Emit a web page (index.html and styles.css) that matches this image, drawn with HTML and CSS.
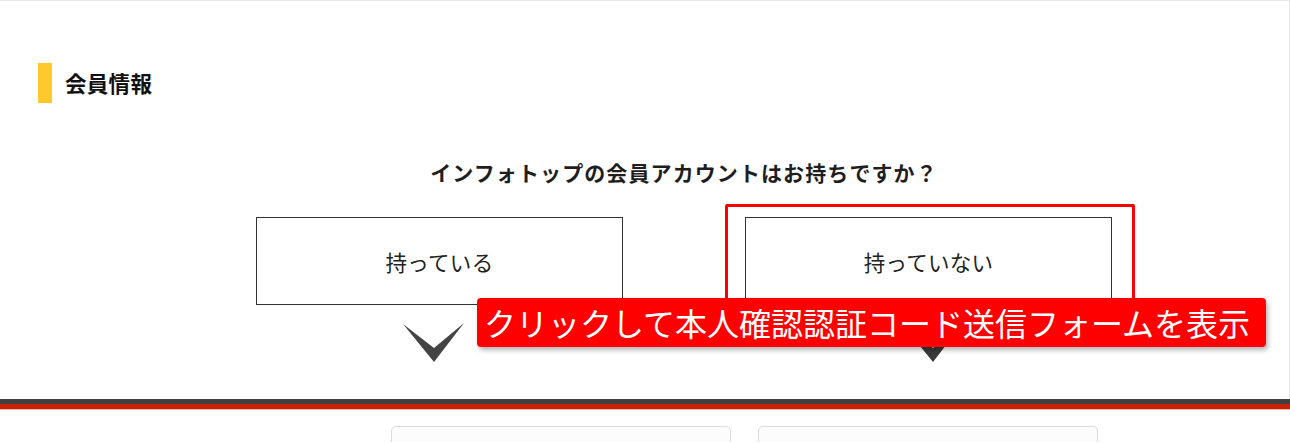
FILE: index.html
```html
<!DOCTYPE html>
<html lang="ja">

<head>
    <meta charset="UTF-8">
    <meta name="viewport" content="width=device-width, initial-scale=1.0">
    <title>会員情報</title>
    <link rel="stylesheet" href="styles.css">
</head>

<body>
    <div id="panel">
        <h2 class="titulo">会員情報</h2>
        <div id="contenido">
            <p class="pregunta">インフォトップの会員アカウントはお持ちですか？</p>
            <div class="opciones">
                <div class="opcion opcion-izq">
                    <button class="boton">持っている</button>
                    <svg class="flecha" width="62" height="40" viewBox="0 0 62 40">
                        <polygon points="0,1 31,39 61,0 31,25" fill="#444"/>
                    </svg>
                </div>
                <div class="opcion opcion-der">
                    <div class="marcado"></div>
                    <button class="boton">持っていない</button>
                    <svg class="flecha" width="62" height="40" viewBox="0 0 62 40">
                        <polygon points="0,1 31,39 61,0 31,25" fill="#3a3a3a"/>
                    </svg>
                </div>
            </div>
        </div>
        <div class="aviso">クリックして本人確認認証コード送信フォームを表示</div>
    </div>
    <div id="barras">
        <div class="barra-oscura"></div>
        <div class="barra-roja"></div>
        <div class="barra-rosa"></div>
    </div>
    <div id="tarjetas">
        <div class="tarjeta"></div>
        <div class="tarjeta"></div>
    </div>
</body>

</html>
```

FILE: styles.css
```css
body {
    margin: 0;
    background-color: white;
    font-family: "Noto Sans CJK JP", "Noto Sans", sans-serif;
    color: #222;
}

#panel {
    position: relative;
    height: 398px;
    border-top: 1px solid #e6e6e6;
    border-right: 1px solid #e6e6e6;
}

.titulo {
    margin: 62px 0 0 38px;
    height: 40px;
    line-height: 40px;
    border-left: 14px solid #ffc92b;
    padding-left: 13px;
    font-size: 21.5px;
    letter-spacing: 0.3px;
    font-weight: bold;
    color: #111;
}

#contenido {
    margin-left: 256px;
    width: 856px;
}

.pregunta {
    margin: 54px 0 0 0;
    text-align: center;
    font-size: 21px;
    line-height: 30px;
    letter-spacing: 1.1px;
    font-weight: bold;
    color: #1e1e1e;
}

.opciones {
    display: flex;
    justify-content: space-between;
    margin-top: 30px;
}

.opcion {
    position: relative;
    width: 367px;
    display: flex;
    flex-direction: column;
    align-items: center;
}

.boton {
    width: 367px;
    height: 88px;
    border: 1px solid #333;
    background-color: white;
    font-family: inherit;
    font-size: 21.5px;
    letter-spacing: 0.3px;
    color: #222;
    padding: 0;
    cursor: pointer;
}

.flecha {
    display: block;
    margin-top: 18px;
}

.opcion-izq .flecha {
    margin-right: 12px;
}

.opcion-der .flecha {
    margin-left: 8px;
}

.marcado {
    position: absolute;
    left: -20px;
    top: -13px;
    width: 404px;
    height: 108px;
    border: 3px solid #ff0000;
    border-radius: 2px;
}

.aviso {
    position: absolute;
    left: 477px;
    top: 297px;
    width: 789px;
    height: 49px;
    line-height: 49px;
    box-sizing: border-box;
    padding: 0 7px;
    background-color: #ff0000;
    color: white;
    font-size: 32px;
    white-space: nowrap;
    border-radius: 4px;
    box-shadow: 2px 3px 5px rgba(0, 0, 0, 0.3);
}

.barra-oscura {
    height: 5px;
    background-color: #404040;
}

.barra-roja {
    height: 5px;
    background-color: #c8220a;
}

.barra-rosa {
    height: 1px;
    background-color: #f3b2a6;
}

#tarjetas {
    display: flex;
    gap: 27px;
    margin: 16px 0 0 391px;
}

.tarjeta {
    width: 338px;
    height: 15px;
    border: 1px solid #dcdcdc;
    border-bottom: none;
    border-radius: 5px 5px 0 0;
    background-color: #fcfcfc;
}
```
